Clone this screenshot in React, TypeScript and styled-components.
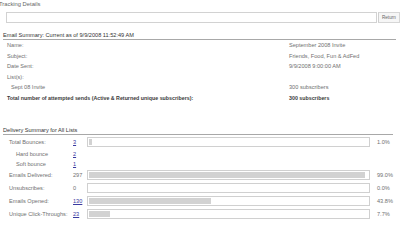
import React from "react";
import styled, { createGlobalStyle } from "styled-components";

const Global = createGlobalStyle`
  html, body { margin: 0; padding: 0; background: #fff; }
  body {
    width: 400px; height: 245px; overflow: hidden;
    font-family: "Liberation Sans", Arial, sans-serif;
    font-size: 5.6px; color: #6a6a6a;
  }
`;

const Page = styled.div`
  display: flex;
  flex-direction: column;
  width: 400px;
`;

const Title = styled.div`
  height: 8px;
  line-height: 8px;
  margin-left: -1px;
  color: #666;
  font-size: 5.8px;
`;

const Toolbar = styled.div`
  display: flex;
  margin: 4px 0 0 6px;
  height: 11px;
`;

const SearchBox = styled.div`
  width: 374px;
  border: 1px solid #d2d2d2;
  box-sizing: border-box;
  background: #fff;
`;

const ReturnButton = styled.div`
  flex: none;
  width: 22px;
  border: 1px solid #d6d6d6;
  border-left-color: #cfcfcf;
  box-sizing: border-box;
  background: #f6f6f6;
  color: #666;
  font-size: 4.6px;
  line-height: 9px;
  padding-left: 3px;
  margin-left: 1px;
`;

const Section = styled.section<{ $top: number; $w: number }>`
  margin: ${(p) => p.$top}px 0 0 3px;
  width: ${(p) => p.$w}px;
`;

const SectionHead = styled.div`
  border-bottom: 1px solid #a8a8a8;
  color: #333;
  font-size: 5.6px;
  line-height: 7px;
  height: 7px;
  white-space: nowrap;
`;

const SummaryGrid = styled.div`
  display: grid;
  grid-template-columns: 282px 1fr;
  grid-auto-rows: 10.5px;
  align-items: center;
  padding-left: 4px;
`;

const SLabel = styled.div<{ $indent?: boolean; $bold?: boolean }>`
  padding-left: ${(p) => (p.$indent ? 4 : 0)}px;
  font-weight: ${(p) => (p.$bold ? "bold" : "normal")};
  font-size: ${(p) => (p.$bold ? 5.3 : 5.6)}px;
  color: ${(p) => (p.$bold ? "#3a3a3a" : "#707070")};
  white-space: nowrap;
`;

const SValue = styled.div<{ $bold?: boolean }>`
  font-weight: ${(p) => (p.$bold ? "bold" : "normal")};
  font-size: ${(p) => (p.$bold ? 5.3 : 5.6)}px;
  color: ${(p) => (p.$bold ? "#3a3a3a" : "#707070")};
  white-space: nowrap;
`;

const DeliveryList = styled.div`
  display: flex;
  flex-direction: column;
  padding-top: 2px;
`;

const DRow = styled.div<{ $h: number; $gap: number }>`
  display: grid;
  grid-template-columns: 64px 14px 283px 1fr;
  align-items: center;
  height: ${(p) => p.$h}px;
  margin-top: ${(p) => p.$gap}px;
  padding-left: 6px;
`;

const DLabel = styled.div<{ $indent?: boolean }>`
  padding-left: ${(p) => (p.$indent ? 7 : 0)}px;
  color: #707070;
  white-space: nowrap;
`;

const Num = styled.div`
  color: #707070;
`;

const NumLink = styled.a`
  color: #3a3aa0;
  text-decoration: underline;
`;

const Bar = styled.div`
  height: 10px;
  border: 1px solid #d0d0d0;
  box-sizing: border-box;
  padding: 1px;
  background: #fff;
`;

const Fill = styled.div`
  height: 100%;
  background: #d2d2d2;
`;

const Pct = styled.div`
  padding-left: 7px;
  color: #707070;
`;

const summary: { label: string; value: string; indent?: boolean; bold?: boolean }[] = [
  { label: "Name:", value: "September 2008 Invite" },
  { label: "Subject:", value: "Friends, Food, Fun & AdFed" },
  { label: "Date Sent:", value: "9/9/2008 9:00:00 AM" },
  { label: "List(s):", value: "" },
  { label: "Sept 08 Invite", value: "300 subscribers", indent: true },
  {
    label: "Total number of attempted sends (Active & Returned unique subscribers):",
    value: "300 subscribers",
    bold: true,
  },
];

type D = {
  label: string;
  num: string;
  link: boolean;
  pct?: number;
  pctText?: string;
  indent?: boolean;
  h: number;
  gap: number;
};

const delivery: D[] = [
  { label: "Total Bounces:", num: "3", link: true, pct: 1.0, pctText: "1.0%", h: 10, gap: 0 },
  { label: "Hard bounce", num: "2", link: true, indent: true, h: 9, gap: 2 },
  { label: "Soft bounce", num: "1", link: true, indent: true, h: 9, gap: 1 },
  { label: "Emails Delivered:", num: "297", link: false, pct: 99.0, pctText: "99.0%", h: 10, gap: 2 },
  { label: "Unsubscribes:", num: "0", link: false, pct: 0, pctText: "0.0%", h: 10, gap: 3 },
  { label: "Emails Opened:", num: "130", link: true, pct: 43.8, pctText: "43.8%", h: 10, gap: 3 },
  { label: "Unique Click-Throughs:", num: "23", link: true, pct: 7.7, pctText: "7.7%", h: 10, gap: 3 },
];

export default function App() {
  return (
    <Page>
      <Global />
      <Title>Tracking Details</Title>
      <Toolbar>
        <SearchBox />
        <ReturnButton>Return</ReturnButton>
      </Toolbar>

      <Section $top={9} $w={393}>
        <SectionHead>Email Summary: Current as of 9/9/2008 11:52:49 AM</SectionHead>
        <SummaryGrid>
          {summary.map((r, i) => (
            <React.Fragment key={i}>
              <SLabel $indent={r.indent} $bold={r.bold}>
                {r.label}
              </SLabel>
              <SValue $bold={r.bold}>{r.value}</SValue>
            </React.Fragment>
          ))}
        </SummaryGrid>
      </Section>

      <Section $top={24} $w={390}>
        <SectionHead>Delivery Summary for All Lists</SectionHead>
        <DeliveryList>
          {delivery.map((d, i) => (
            <DRow key={i} $h={d.h} $gap={d.gap}>
              <DLabel $indent={d.indent}>{d.label}</DLabel>
              {d.link ? (
                <Num>
                  <NumLink href="#">{d.num}</NumLink>
                </Num>
              ) : (
                <Num>{d.num}</Num>
              )}
              {d.pct !== undefined ? (
                <Bar>
                  <Fill style={{ width: `${d.pct}%` }} />
                </Bar>
              ) : (
                <div />
              )}
              {d.pctText ? <Pct>{d.pctText}</Pct> : <div />}
            </DRow>
          ))}
        </DeliveryList>
      </Section>
    </Page>
  );
}
